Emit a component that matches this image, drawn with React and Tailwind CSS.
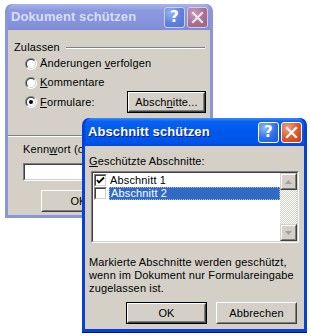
import React from "react";

const F = { fontFamily: "Tahoma, 'Liberation Sans', Arial, sans-serif" };
const TF = { fontFamily: "'Trebuchet MS', 'Liberation Sans', Arial, sans-serif" };

function U({ children }) {
  return <span className="underline underline-offset-[1px]">{children}</span>;
}

function HelpBtn({ active }) {
  return (
    <div
      className={
        "w-[21px] h-[21px] rounded-[3px] border flex items-center justify-center text-white font-bold text-[15px] leading-none " +
        (active
          ? "border-white bg-[radial-gradient(circle_at_30%_25%,#8fb8ff,#2f6fe8_55%,#1f55d8)]"
          : "border-[#c8d0f0] bg-[radial-gradient(circle_at_30%_25%,#9ab4f0,#5f7fdc_55%,#5575d4)] text-[#e8eefc]")
      }
      style={{ fontFamily: "'DejaVu Sans', sans-serif" }}
    >
      ?
    </div>
  );
}

function CloseBtn({ active }) {
  return (
    <div
      className={
        "w-[21px] h-[21px] rounded-[3px] border flex items-center justify-center " +
        (active
          ? "border-white bg-[radial-gradient(circle_at_30%_25%,#f0a080,#e0552a_55%,#c83c1a)]"
          : "border-[#d8c8e0] bg-[radial-gradient(circle_at_30%_25%,#c89ab8,#a8708f_55%,#9a6484)]")
      }
    >
      <svg width="13" height="13" viewBox="0 0 13 13">
        <path d="M2 2 L11 11 M11 2 L2 11" stroke={active ? "#fff" : "#f0e6f0"} strokeWidth="2.2" strokeLinecap="square" />
      </svg>
    </div>
  );
}

function Radio({ checked }) {
  return (
    <div className="w-[12px] h-[12px] rounded-full bg-[linear-gradient(135deg,#808080_0%,#808080_45%,#ffffff_55%,#ffffff_100%)] p-px">
      <div className="w-full h-full rounded-full bg-[linear-gradient(135deg,#404040_0%,#404040_45%,#d4d0c8_55%,#d4d0c8_100%)] p-px">
        <div className="w-full h-full rounded-full bg-white flex items-center justify-center">
          {checked && <div className="w-[4px] h-[4px] rounded-full bg-black" />}
        </div>
      </div>
    </div>
  );
}

function Btn({ children, def, className = "" }) {
  return (
    <div className={"bg-[#d4d0c8] " + (def ? "border border-black " : "") + className}>
      <div className="w-full h-full border border-t-white border-l-white border-r-[#404040] border-b-[#404040]">
        <div className="w-full h-full border border-t-[#d4d0c8] border-l-[#d4d0c8] border-r-[#808080] border-b-[#808080] flex items-center justify-center text-[11px] text-black">
          {children}
        </div>
      </div>
    </div>
  );
}

function Check({ checked }) {
  return (
    <div className="w-[13px] h-[13px] border border-t-[#808080] border-l-[#808080] border-r-white border-b-white">
      <div className="w-full h-full border border-t-[#404040] border-l-[#404040] border-r-[#d4d0c8] border-b-[#d4d0c8] bg-white flex items-center justify-center">
        {checked && (
          <svg width="9" height="9" viewBox="0 0 9 9">
            <path d="M1 4 L3 6.5 L8 1.5" stroke="#000" strokeWidth="1.8" fill="none" />
          </svg>
        )}
      </div>
    </div>
  );
}

function ScrollArrow({ up }) {
  return (
    <div className="w-[17px] h-[17px] bg-[#d4d0c8] border border-t-[#d4d0c8] border-l-[#d4d0c8] border-r-[#404040] border-b-[#404040]">
      <div className="w-full h-full border border-t-white border-l-white border-r-[#808080] border-b-[#808080] flex items-center justify-center">
        <svg width="7" height="4" viewBox="0 0 7 4">
          <path d={up ? "M0 4 L3.5 0 L7 4 Z" : "M0 0 L3.5 4 L7 0 Z"} fill="#a0a0a0" />
        </svg>
      </div>
    </div>
  );
}

export default function App() {
  return (
    <div className="relative w-[311px] h-[336px] bg-white overflow-hidden tracking-[0.15px]" style={F}>
      {/* Back (inactive) window */}
      <div className="absolute left-[5px] top-[4px] w-[208px] h-[214px] rounded-t-[7px] bg-[#8a96da] flex flex-col px-[3px] pb-[3px]">
        <div className="h-[26px] shrink-0 flex items-center rounded-t-[7px] bg-[linear-gradient(to_bottom,#a9b4ec_0%,#8c99de_25%,#8492da_80%,#7f8cd4_100%)] pl-[3px] pr-[2px]">
          <span className="flex-1 text-[13px] font-bold text-[#d6def8] tracking-[0.1px]" style={TF}>
            Dokument schützen
          </span>
          <div className="flex gap-[2px]">
            <HelpBtn />
            <CloseBtn />
          </div>
        </div>
        <div className="flex-1 bg-[#d4d0c8] flex flex-col text-[11px] text-black leading-[13px]">
          <div className="flex items-center mt-[11px] pl-[6px] pr-[5px]">
            <span>Zulassen</span>
            <div className="flex-1 ml-[6px] border-t border-[#808080] border-b border-b-white h-0" />
          </div>
          <div className="flex items-center h-[19px] pl-[17px]">
            <Radio />
            <span className="ml-[3px]">Änderungen <U>v</U>erfolgen</span>
          </div>
          <div className="flex items-center h-[19px] pl-[17px]">
            <Radio />
            <span className="ml-[3px]"><U>K</U>ommentare</span>
          </div>
          <div className="flex items-center h-[22px] mt-[-1px] pl-[17px]">
            <Radio checked />
            <span className="ml-[3px] flex-1"><U>F</U>ormulare:</span>
            <Btn def className="w-[79px] h-[22px] mr-[4px]">Absch<U>n</U>itte...</Btn>
          </div>
          <div className="mt-[22px] border-t border-[#808080] border-b border-b-white h-0 mr-[4px]" />
          <div className="mt-[6px] ml-[15px] whitespace-nowrap">Kenn<U>w</U>ort (optional):</div>
          <div className="mt-[7px] ml-[15px] w-[180px] h-[18px] bg-white border border-t-[#808080] border-l-[#808080] border-r-white border-b-white">
            <div className="w-full h-full border border-t-[#404040] border-l-[#404040] border-r-[#d4d0c8] border-b-[#d4d0c8]" />
          </div>
          <div className="mt-[9px] ml-[33px]">
            <Btn className="w-[75px] h-[22px]">OK</Btn>
          </div>
        </div>
      </div>

      {/* Front (active) window */}
      <div className="absolute left-[82px] top-[118px] w-[225px] h-[215px] rounded-t-[7px] bg-[#0841d9] flex flex-col px-[3px] pb-[3px] border-b border-[#00138c]">
        <div className="h-[28px] shrink-0 flex items-center rounded-t-[7px] bg-[linear-gradient(to_bottom,#3c8cfc_0%,#0a62f0_12%,#0058ee_45%,#0055e8_85%,#0048dc_100%)] pl-[3px] pr-[2px]">
          <span className="flex-1 text-[13px] font-bold text-white tracking-[0.1px] [text-shadow:1px_1px_0_#0a1f7a]" style={TF}>
            Abschnitt schützen
          </span>
          <div className="flex gap-[2px]">
            <HelpBtn active />
            <CloseBtn active />
          </div>
        </div>
        <div className="flex-1 bg-[#d4d0c8] flex flex-col text-[11px] text-black leading-[13px]">
          <div className="mt-[9px] pl-[4px]"><U>G</U>eschützte Abschnitte:</div>
          <div className="mt-[3px] ml-[6px] w-[208px] h-[72px] border border-t-[#808080] border-l-[#808080] border-r-white border-b-white">
            <div className="w-full h-full border border-t-[#404040] border-l-[#404040] border-r-[#d4d0c8] border-b-[#d4d0c8] bg-white flex">
              <div className="flex-1 flex flex-col pt-px">
                <div className="flex items-center h-[13px] pl-px">
                  <Check checked />
                  <span className="ml-[2px] px-px">Abschnitt 1</span>
                </div>
                <div className="flex items-center h-[13px] pl-px">
                  <Check />
                  <span className="ml-[2px] px-px flex-1 bg-[#316ac5] text-white border border-dotted border-[#9fb8e8] leading-[11px] h-[13px]">Abschnitt 2</span>
                </div>
              </div>
              <div className="w-[17px] flex flex-col">
                <ScrollArrow up />
                <div className="flex-1 bg-[repeating-conic-gradient(#d4d0c8_0%_25%,#ffffff_0%_50%)] bg-[length:2px_2px]" />
                <ScrollArrow />
              </div>
            </div>
          </div>
          <div className="mt-[13px] pl-[4px]">
            Markierte Abschnitte werden geschützt,
            <br />
            wenn im Dokument nur Formulareingabe
            <br />
            zugelassen ist.
          </div>
          <div className="mt-[7px] flex gap-[9px] pl-[41px]">
            <Btn def className="w-[81px] h-[22px]">OK</Btn>
            <Btn className="w-[81px] h-[22px]">Abbrechen</Btn>
          </div>
        </div>
      </div>
    </div>
  );
}
